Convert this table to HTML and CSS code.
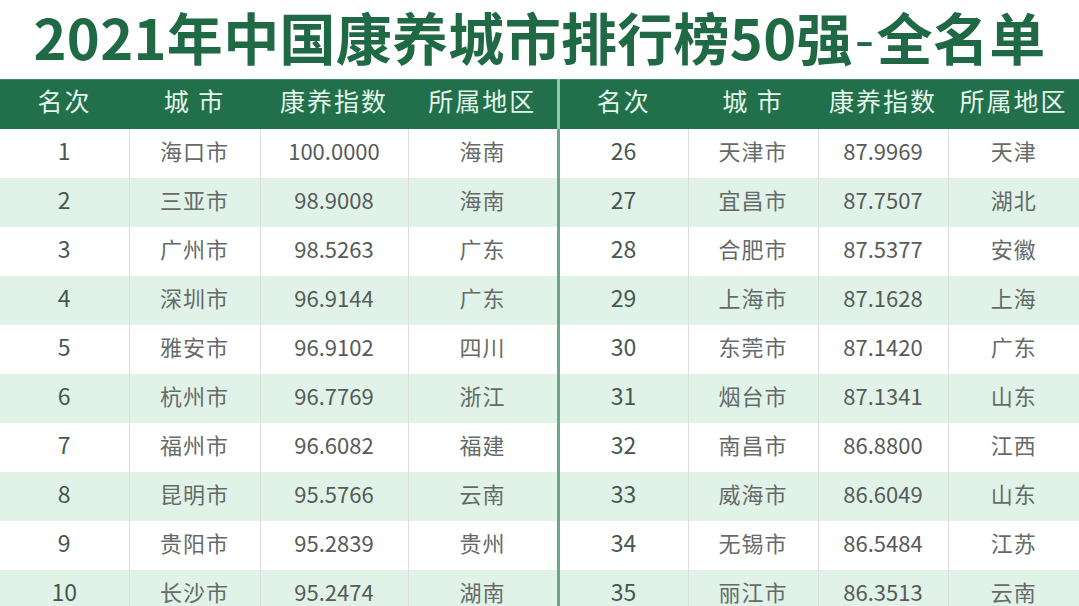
FILE: index.html
```html
<!DOCTYPE html>
<html lang="zh-CN">
<head>
<meta charset="utf-8">
<title>2021年中国康养城市排行榜50强-全名单</title>
<link rel="stylesheet" href="styles.css">
</head>
<body>
<h1 class="title">2021年中国康养城市排行榜50强<span class="dash">-</span>全名单</h1>
<table class="rank">
  <colgroup>
    <col class="c1"><col class="c2"><col class="c3"><col class="c4">
    <col class="c5"><col class="c6"><col class="c7"><col class="c8">
  </colgroup>
  <thead>
    <tr>
      <th>名次</th><th>城 市</th><th>康养指数</th><th>所属地区</th>
      <th class="split">名次</th><th>城 市</th><th>康养指数</th><th>所属地区</th>
    </tr>
  </thead>
  <tbody>
    <tr><td class="n">1</td><td>海口市</td><td class="v">100.0000</td><td>海南</td><td class="n split">26</td><td>天津市</td><td class="v">87.9969</td><td>天津</td></tr>
    <tr><td class="n">2</td><td>三亚市</td><td class="v">98.9008</td><td>海南</td><td class="n split">27</td><td>宜昌市</td><td class="v">87.7507</td><td>湖北</td></tr>
    <tr><td class="n">3</td><td>广州市</td><td class="v">98.5263</td><td>广东</td><td class="n split">28</td><td>合肥市</td><td class="v">87.5377</td><td>安徽</td></tr>
    <tr><td class="n">4</td><td>深圳市</td><td class="v">96.9144</td><td>广东</td><td class="n split">29</td><td>上海市</td><td class="v">87.1628</td><td>上海</td></tr>
    <tr><td class="n">5</td><td>雅安市</td><td class="v">96.9102</td><td>四川</td><td class="n split">30</td><td>东莞市</td><td class="v">87.1420</td><td>广东</td></tr>
    <tr><td class="n">6</td><td>杭州市</td><td class="v">96.7769</td><td>浙江</td><td class="n split">31</td><td>烟台市</td><td class="v">87.1341</td><td>山东</td></tr>
    <tr><td class="n">7</td><td>福州市</td><td class="v">96.6082</td><td>福建</td><td class="n split">32</td><td>南昌市</td><td class="v">86.8800</td><td>江西</td></tr>
    <tr><td class="n">8</td><td>昆明市</td><td class="v">95.5766</td><td>云南</td><td class="n split">33</td><td>威海市</td><td class="v">86.6049</td><td>山东</td></tr>
    <tr><td class="n">9</td><td>贵阳市</td><td class="v">95.2839</td><td>贵州</td><td class="n split">34</td><td>无锡市</td><td class="v">86.5484</td><td>江苏</td></tr>
    <tr><td class="n">10</td><td>长沙市</td><td class="v">95.2474</td><td>湖南</td><td class="n split">35</td><td>丽江市</td><td class="v">86.3513</td><td>云南</td></tr>
  </tbody>
</table>
</body>
</html>
```

FILE: styles.css
```css
html, body {
  margin: 0;
  padding: 0;
  background: #ffffff;
}
body {
  width: 1079px;
  height: 606px;
  overflow: hidden;
  font-family: "Noto Sans CJK SC", "Noto Sans", sans-serif;
}
.title {
  margin: -5px 0 0;
  height: 84px;
  line-height: 81px;
  text-align: center;
  font-size: 56px;
  font-weight: 700;
  color: #1f6a45;
  letter-spacing: 0.3px;
  white-space: nowrap;
}
.title .dash {
  font-weight: 400;
  padding: 0 2px;
}
.rank {
  width: 1079px;
  border-collapse: collapse;
  table-layout: fixed;
}
.c1 { width: 129px; }
.c2 { width: 131px; }
.c3 { width: 148px; }
.c4 { width: 150px; }
.c5 { width: 130px; }
.c6 { width: 130px; }
.c7 { width: 130px; }
.c8 { width: 131px; }
.rank th {
  height: 49px;
  padding: 0 0 8px;
  box-sizing: border-box;
  background: #21704b;
  color: #e3f6ea;
  font-weight: 400;
  font-size: 25px;
  letter-spacing: 2px;
  text-align: center;
  border-top: 1px solid #3f8a64;
}
.rank td {
  height: 49.1px;
  padding: 0 0 7px;
  box-sizing: border-box;
  text-align: center;
  font-size: 22px;
  letter-spacing: 1px;
  color: #666a68;
  border-left: 1px solid #dcdfdd;
}
.rank td.v {
  color: #575b59;
  letter-spacing: 0;
}
.rank td.n {
  color: #46574e;
  letter-spacing: 0;
  font-size: 23px;
}
.rank td:first-child {
  border-left: none;
}
.rank tbody tr:nth-child(even) td {
  background: #e1f3e8;
}
.rank .split {
  border-left: 3px solid #6aa888;
}
.rank th.split {
  border-left: 3px solid #8cc9a8;
}
```
